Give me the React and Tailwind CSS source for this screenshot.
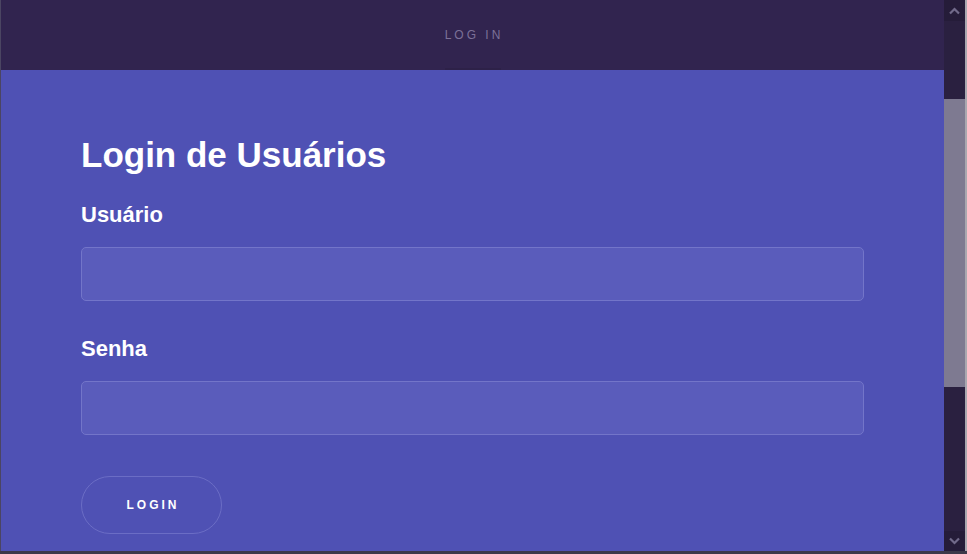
import React from 'react'

const Chevron = ({ down }) => (
  <svg width="11" height="8" viewBox="0 0 11 8" className="block">
    <polyline
      points={down ? '1,1.5 5.5,6 10,1.5' : '1,6.5 5.5,2 10,6.5'}
      fill="none"
      stroke="#716a8a"
      strokeWidth="2.2"
    />
  </svg>
)

const Field = ({ label, type = 'text', first }) => (
  <div className={first ? 'mt-[27px]' : 'mt-[35px]'}>
    <label className="block text-[22px] leading-[25px] font-bold text-white">{label}</label>
    <input
      type={type}
      className="mt-[20px] block w-full h-[54px] rounded-[5px] bg-[#5a5cbb] border border-[#7375c9] outline-none px-4 text-white"
    />
  </div>
)

export default function App() {
  return (
    <div className="w-[967px] h-[554px] flex flex-col overflow-hidden bg-[#31244f] font-['Liberation_Sans',Arial,sans-serif]">
      <div className="flex h-[551px]">
        <div className="w-px bg-[#4b4562]" />

        {/* page + modal */}
        <div className="w-[943px] flex flex-col">
          <header className="h-[70px] relative flex items-center justify-center">
            <span className="text-[12px] tracking-[3px] text-[#7c7198] pl-[3px]">LOG IN</span>
            <div className="absolute bottom-0 left-[444px] w-[56px] h-[2px] bg-[#2d2148]" />
          </header>

          <main className="flex-1 bg-[#4f51b4] px-[80px] pt-[65px]">
            <h1 className="text-[35px] leading-[40px] font-bold text-white">Login de Usuários</h1>
            <Field label="Usuário" first />
            <Field label="Senha" type="password" />
            <button className="mt-[41px] w-[141px] h-[58px] rounded-full border border-[#6b6dc5] text-white text-[12px] font-bold tracking-[3px] pl-[3px]">
              LOGIN
            </button>
          </main>
        </div>

        {/* scrollbar */}
        <div className="w-[21px] flex flex-col bg-[#2a2040]">
          <div className="h-[21px] flex items-center justify-center bg-[#251c39]">
            <Chevron />
          </div>
          <div className="flex-1 pt-[78px] pb-[144px]">
            <div className="h-[288px] bg-[#7e7a91]" />
          </div>
          <div className="h-[20px] flex items-center justify-center bg-[#251c39]">
            <Chevron down />
          </div>
        </div>
        <div className="w-[2px] bg-[#a9a8b0]" />
      </div>
      <div className="h-[3px] bg-[#3c3849]" />
    </div>
  )
}
